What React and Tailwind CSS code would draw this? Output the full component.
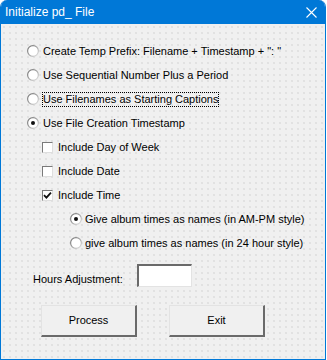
import { useState } from 'react';

function Radio({ checked }) {
  return (
    <svg width="12" height="12" viewBox="0 0 12 12" className="shrink-0">
      <defs>
        <linearGradient id="rg" x1="0" y1="0" x2="1" y2="1">
          <stop offset="0" stopColor="#6f6f6f" />
          <stop offset="0.55" stopColor="#a8a8a8" />
          <stop offset="1" stopColor="#e8e8e8" />
        </linearGradient>
      </defs>
      <circle cx="6" cy="6" r="5.4" fill="#fff" stroke="url(#rg)" strokeWidth="1.2" />
      {checked && <circle cx="6" cy="6" r="2" fill="#111" />}
    </svg>
  );
}

function Check({ checked }) {
  return (
    <span className="w-[11px] h-[11px] shrink-0 bg-white border-t border-l border-[#7a7a7a] border-r border-b border-r-[#dedede] border-b-[#dedede] flex items-center justify-center">
      {checked && (
        <svg width="9" height="9" viewBox="0 0 9 9">
          <path d="M1 4.2 L3.4 6.6 L8 1.6" fill="none" stroke="#111" strokeWidth="1.8" />
        </svg>
      )}
    </span>
  );
}

function Row({ indent, children }) {
  return <div className={`h-[24px] flex items-center ${indent}`}>{children}</div>;
}

export default function App() {
  const [mode, setMode] = useState(3);
  const [style, setStyle] = useState(0);

  const modes = [
    'Create Temp Prefix: Filename + Timestamp + ": "',
    'Use Sequential Number Plus a Period',
    'Use Filenames as Starting Captions',
    'Use File Creation Timestamp',
  ];

  return (
    <div className="w-[327px] h-[360px] bg-white" style={{ fontFamily: '"Liberation Sans", Arial, sans-serif' }}>
      <div className="w-[326px] h-[360px] flex flex-col rounded-t-[7px] overflow-hidden border border-t-0 border-[#0078d7] bg-[#f0f0f0]">
        <div className="h-[24px] shrink-0 bg-[#0078d7] flex items-center justify-between pl-[4px] pr-[8px] text-white text-[12px]">
          <span>Initialize pd_ File</span>
          <svg width="11" height="11" viewBox="0 0 11 11">
            <path d="M0.5 0.5 L10.5 10.5 M10.5 0.5 L0.5 10.5" stroke="#fff" strokeWidth="1.1" />
          </svg>
        </div>

        <div className="flex-1 bg-[radial-gradient(circle,#d9d9d9_0.6px,transparent_0.9px)] bg-[length:6px_6px] text-[11px] text-black pt-[15px]">
          {modes.map((m, i) => (
            <Row key={i} indent="pl-[26px]">
              <div className="flex items-center gap-[3px]" onClick={() => setMode(i)}>
                <Radio checked={mode === i} />
                <span className={`border leading-[13px] ${i === 2 ? 'border-dotted border-black' : 'border-transparent'}`}>{m}</span>
              </div>
            </Row>
          ))}
          <Row indent="pl-[41px]">
            <div className="flex items-center gap-[5px]">
              <Check />
              <span>Include Day of Week</span>
            </div>
          </Row>
          <Row indent="pl-[41px]">
            <div className="flex items-center gap-[5px]">
              <Check />
              <span>Include Date</span>
            </div>
          </Row>
          <Row indent="pl-[41px]">
            <div className="flex items-center gap-[5px]">
              <Check checked />
              <span>Include Time</span>
            </div>
          </Row>
          <Row indent="pl-[69px]">
            <div className="flex items-center gap-[3px]" onClick={() => setStyle(0)}>
              <Radio checked={style === 0} />
              <span>Give album times as names (in AM-PM style)</span>
            </div>
          </Row>
          <Row indent="pl-[69px]">
            <div className="flex items-center gap-[3px]" onClick={() => setStyle(1)}>
              <Radio checked={style === 1} />
              <span>give album times as names (in 24 hour style)</span>
            </div>
          </Row>

          <div className="flex items-center mt-[9px] pl-[32px]">
            <span className="w-[104px] pt-[7px]">Hours Adjustment:</span>
            <div className="w-[55px] h-[23px] bg-white border-t-2 border-l-2 border-[#6a6a6a] border-r border-b border-r-[#e3e3e3] border-b-[#e3e3e3]" />
          </div>

          <div className="flex mt-[17px] pl-[40px] gap-[32px]">
            <button className="w-[96px] h-[32px] bg-[#f0f0f0] border-t border-l border-[#e3e3e3] border-r-2 border-b-2 border-r-[#6a6a6a] border-b-[#6a6a6a] text-[11px]">
              Process
            </button>
            <button className="w-[96px] h-[32px] bg-[#f0f0f0] border-t border-l border-[#e3e3e3] border-r-2 border-b-2 border-r-[#6a6a6a] border-b-[#6a6a6a] text-[11px]">
              Exit
            </button>
          </div>
        </div>
      </div>
    </div>
  );
}
